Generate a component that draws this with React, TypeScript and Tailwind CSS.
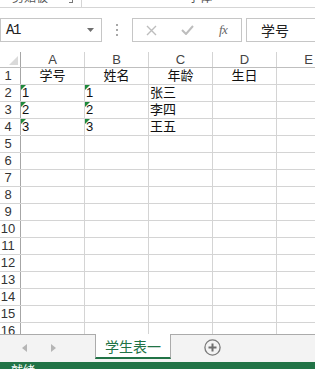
const cols = ["A", "B", "C", "D"];

const data: Record<number, { text: string; flag?: boolean; center?: boolean }[]> = {
  1: [
    { text: "学号", center: true },
    { text: "姓名", center: true },
    { text: "年龄", center: true },
    { text: "生日", center: true },
  ],
  2: [{ text: "1", flag: true }, { text: "1", flag: true }, { text: "张三" }, { text: "" }],
  3: [{ text: "2", flag: true }, { text: "2", flag: true }, { text: "李四" }, { text: "" }],
  4: [{ text: "3", flag: true }, { text: "3", flag: true }, { text: "王五" }, { text: "" }],
};

const rows = Array.from({ length: 16 }, (_, i) => i + 1);

function Flag() {
  return (
    <svg className="absolute left-0 top-0" width="5" height="5" viewBox="0 0 5 5">
      <polygon points="0,0 5,0 0,5" fill="#1e8a3c" />
    </svg>
  );
}

export default function App() {
  return (
    <div className="w-[315px] h-[369px] overflow-hidden bg-white flex flex-col font-['Liberation_Sans','Noto_Sans_CJK_SC',sans-serif] text-[#333]">
      {/* ribbon remnant */}
      <div className="h-[8px] shrink-0 border-b border-[#d5d5d5] overflow-hidden flex items-start">
        <span className="shrink-0 ml-[12px] -mt-[8px] text-[12px] leading-[12px] text-[#555]">剪贴板</span>
        <span className="shrink-0 ml-[21px] w-[4px] h-[3px] border-r border-b border-[#777]" />
        <span className="shrink-0 ml-[8px] h-[8px] border-l border-[#d5d5d5]" />
        <span className="shrink-0 ml-[106px] -mt-[8px] text-[12px] leading-[12px] text-[#555]">字体</span>
      </div>

      {/* formula bar */}
      <div className="h-[41px] shrink-0 flex items-start pt-[10px]">
        <div className="w-[102px] h-[24px] shrink-0 border border-[#c6c6c6] flex items-center justify-between pl-[5px] pr-[7px]">
          <span className="font-['Liberation_Mono',monospace] text-[14px] tracking-[-1.4px] text-[#222]">A1</span>
          <svg width="7" height="4" viewBox="0 0 7 4">
            <polygon points="0,0 7,0 3.5,4" fill="#6f6f6f" />
          </svg>
        </div>
        <div className="w-[30px] h-[24px] shrink-0 flex flex-col items-center justify-center gap-[3px]">
          <span className="w-[2px] h-[2px] bg-[#a8a8a8]" />
          <span className="w-[2px] h-[2px] bg-[#a8a8a8]" />
          <span className="w-[2px] h-[2px] bg-[#a8a8a8]" />
        </div>
        <div className="w-[110px] h-[24px] shrink-0 border border-[#c6c6c6] flex items-center">
          <div className="w-[36px] flex justify-center ml-[1px]">
            <svg width="11" height="11" viewBox="0 0 11 11">
              <path d="M1 1 L10 10 M10 1 L1 10" stroke="#bdbdbd" strokeWidth="1.4" />
            </svg>
          </div>
          <div className="w-[36px] flex justify-center">
            <svg width="13" height="10" viewBox="0 0 13 10">
              <path d="M1 5 L5 9 L12 1" stroke="#bdbdbd" strokeWidth="2" fill="none" />
            </svg>
          </div>
          <div className="w-[36px] flex justify-center">
            <span className="font-['Liberation_Serif',serif] italic text-[13px] text-[#666] tracking-[-0.5px]">fx</span>
          </div>
        </div>
        <div className="ml-[4px] w-[80px] h-[24px] shrink-0 border border-[#c6c6c6] flex items-center pl-[14px]">
          <span className="font-['Noto_Sans_CJK_SC',sans-serif] text-[14px] text-[#222]">学号</span>
        </div>
      </div>

      {/* grid */}
      <div className="flex-1 overflow-hidden text-[13px]">
        <div className="h-[19px] flex items-end border-b border-[#bfbfbf]">
          <div className="w-[21px] h-[15px] shrink-0 border-r border-[#a6a6a6] flex items-end justify-end pr-[2px] pb-[2px]">
            <svg width="9" height="9" viewBox="0 0 9 9">
              <polygon points="9,0 9,9 0,9" fill="#dadada" />
            </svg>
          </div>
          {[...cols, "E"].map((c) => (
            <div
              key={c}
              className="w-[64px] h-[15px] shrink-0 border-r border-[#d4d4d4] flex items-center justify-center text-[#444] leading-[15px]"
            >
              {c}
            </div>
          ))}
        </div>
        {rows.map((r) => (
          <div key={r} className="h-[17px] flex border-b border-[#d4d4d4]">
            <div className="w-[21px] shrink-0 border-r border-[#a6a6a6] text-center pr-[4px] leading-[16px] text-[#333]">
              {r}
            </div>
            {cols.map((c, i) => {
              const cell = data[r]?.[i];
              return (
                <div
                  key={c}
                  className={
                    "relative w-[64px] shrink-0 border-r border-[#d4d4d4] leading-[16px] text-[#111] " +
                    (cell?.center ? "text-center" : "pl-[1px]")
                  }
                >
                  {cell?.flag && <Flag />}
                  {cell?.text}
                </div>
              );
            })}
            <div className="w-[64px] shrink-0 border-r border-[#d4d4d4]" />
          </div>
        ))}
      </div>

      {/* sheet tabs */}
      <div className="h-[28px] shrink-0 flex bg-[#f3f3f3]">
        <div className="w-[95px] shrink-0 border-t border-[#ababab] flex items-center pb-[2px]">
          <svg className="ml-[22px]" width="5" height="8" viewBox="0 0 5 8">
            <polygon points="5,0 5,8 0,4" fill="#b5b5b5" />
          </svg>
          <svg className="ml-[24px]" width="5" height="8" viewBox="0 0 5 8">
            <polygon points="0,0 0,8 5,4" fill="#b5b5b5" />
          </svg>
        </div>
        <div className="w-[76px] h-[25px] shrink-0 bg-white border-x border-[#ababab] border-b-2 border-b-[#217346] flex items-center justify-center">
          <span className="font-['Noto_Sans_CJK_SC',sans-serif] text-[14px] leading-[16px] text-[#217346]">学生表一</span>
        </div>
        <div className="flex-1 border-t border-[#ababab] flex items-center pb-[2px]">
          <svg className="ml-[33px]" width="17" height="17" viewBox="0 0 17 17">
            <circle cx="8.5" cy="8.5" r="7.6" fill="none" stroke="#7a7a7a" strokeWidth="1.3" />
            <path d="M8.5 4.5 V12.5 M4.5 8.5 H12.5" stroke="#6f6f6f" strokeWidth="2" />
          </svg>
        </div>
      </div>

      {/* status bar */}
      <div className="h-[7px] shrink-0 bg-[#217346] overflow-hidden">
        <span className="block ml-[11px] mt-[3px] text-[12px] leading-[12px] text-white">就绪</span>
      </div>
    </div>
  );
}
